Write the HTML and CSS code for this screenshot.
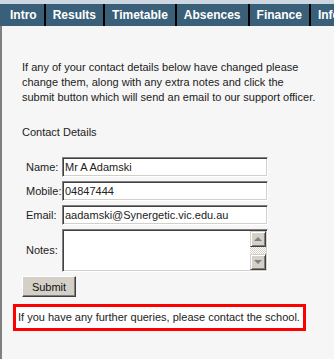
FILE: index.html
```html
<!DOCTYPE html>
<html lang="en">
<head>
	<meta charset="UTF-8">
	<title>Contact Details</title>
	<link rel="stylesheet" href="styles.css">
</head>
<body>
	<div class="strip"></div>
	<ul class="tabs">
		<li>Intro</li>
		<li>Results</li>
		<li>Timetable</li>
		<li>Absences</li>
		<li>Finance</li>
		<li>Information</li>
	</ul>
	<div class="page">
		<p class="intro">If any of your contact details below have changed please<br>change them, along with any extra notes and click the<br>submit button which will send an email to our support officer.</p>
		<p class="heading">Contact Details</p>
		<form class="contact">
			<div class="row">
				<label>Name:</label>
				<input type="text" value="Mr A Adamski">
			</div>
			<div class="row">
				<label>Mobile:</label>
				<input type="text" value="04847444">
			</div>
			<div class="row">
				<label>Email:</label>
				<input type="text" value="aadamski@Synergetic.vic.edu.au">
			</div>
			<div class="row">
				<label>Notes:</label>
				<div class="notes">
					<textarea></textarea>
					<div class="scroll">
						<span class="arrow up"></span>
						<span class="track"></span>
						<span class="arrow down"></span>
					</div>
				</div>
			</div>
			<button type="button" class="submit">Submit</button>
		</form>
		<div class="notice">If you have any further queries, please contact the school.</div>
	</div>
</body>
</html>
```

FILE: styles.css
```css
*{margin: 0;padding: 0;box-sizing: border-box;}
body{
	background: #f6f6f6;
	font: 11px/15px 'Liberation Sans', Arial, sans-serif;
	color: #222;
}
ul{list-style: none;}
.strip{
	height: 4px;
	background: #cdd7e1;
}
.tabs{
	display: flex;
	height: 22px;
	background: #3a6079;
	overflow: hidden;
	white-space: nowrap;
}
.tabs li{
	flex: none;
	padding: 0 7px;
	border-right: 2px solid #000;
	font: bold 12px/22px 'Liberation Sans', Arial, sans-serif;
	color: #fff;
}
.tabs li:first-child{
	padding-left: 10px;
}
.page{
	min-height: calc(100vh - 26px);
	border-left: 2px solid #808080;
	padding: 34px 0 0 11px;
}
.intro{
	width: 310px;
	margin-left: 9px;
}
.heading{
	margin: 20px 0 0 9px;
}
.contact{
	margin: 17px 0 0 9px;
}
.row{
	display: flex;
	align-items: center;
	padding-left: 4px;
	margin-bottom: 4px;
}
.row label{
	width: 36px;
}
.row input{
	width: 206px;
	height: 20px;
	padding: 0 2px;
	background: #fff;
	border: 1px solid;
	border-color: #808080 #fff #fff #808080;
	box-shadow: inset 1px 1px #404040, inset -1px -1px #d4d0c8;
	font: 11px 'Liberation Sans', Arial, sans-serif;
	color: #222;
	outline: none;
}
.notes{
	display: flex;
	width: 206px;
	height: 43px;
	background: #fff;
	border: 1px solid;
	border-color: #808080 #fff #fff #808080;
	box-shadow: inset 1px 1px #404040, inset -1px -1px #d4d0c8;
	padding: 1px;
}
.notes textarea{
	flex: 1;
	border: none;
	resize: none;
	outline: none;
	background: #fff;
}
.scroll{
	display: flex;
	flex-direction: column;
	width: 16px;
}
.scroll .arrow{
	position: relative;
	height: 16px;
	background: #d4d0c8;
	border: 1px solid;
	border-color: #d4d0c8 #404040 #404040 #d4d0c8;
	box-shadow: inset 1px 1px #fff, inset -1px -1px #808080;
}
.scroll .arrow::after{
	content: '';
	position: absolute;
	left: 3px;
	top: 4px;
	border: 4px solid transparent;
}
.scroll .up::after{
	border-bottom-color: #808080;
	top: 1px;
}
.scroll .down::after{
	border-top-color: #808080;
	top: 5px;
}
.scroll .track{
	flex: 1;
	background: repeating-conic-gradient(#d4d0c8 0 25%, #fff 0 50%) 0 0/2px 2px;
}
.submit{
	display: block;
	width: 54px;
	height: 21px;
	background: #d4d0c8;
	border: 1px solid;
	border-color: #fff #404040 #404040 #fff;
	box-shadow: inset -1px -1px #808080;
	font: 11px 'Liberation Sans', Arial, sans-serif;
	color: #111;
}
.notice{
	display: inline-block;
	margin-top: 7px;
	padding: 3px 3px 3px 2px;
	background: #fff;
	border: 3px solid #f00;
}
```
